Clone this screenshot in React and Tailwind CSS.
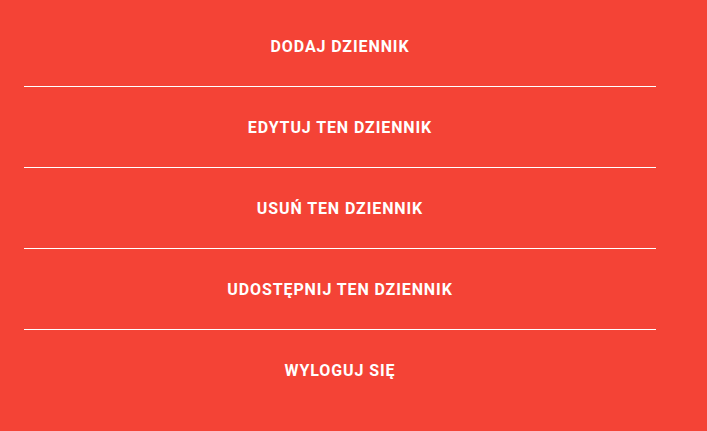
import React from 'react';

const items = ['Dodaj dziennik', 'Edytuj ten dziennik', 'Usuń ten dziennik', 'Udostępnij ten dziennik', 'Wyloguj się'];

const App = () => {
    return (
        <div className="min-h-[431px] w-full bg-[#f44336] pt-[6px]" style={{ fontFamily: 'Roboto, sans-serif' }}>
            <ul className="ml-[24px] w-[632px]">
                {items.map((label, i) => (
                    <li
                        key={label}
                        className={`box-content flex h-[78px] items-center justify-center pt-[2px] text-[16px] font-bold uppercase tracking-[0.9px] text-white ${i < items.length - 1 ? 'border-b border-white' : ''}`}
                    >
                        {label}
                    </li>
                ))}
            </ul>
        </div>
    );
};

export default App;
